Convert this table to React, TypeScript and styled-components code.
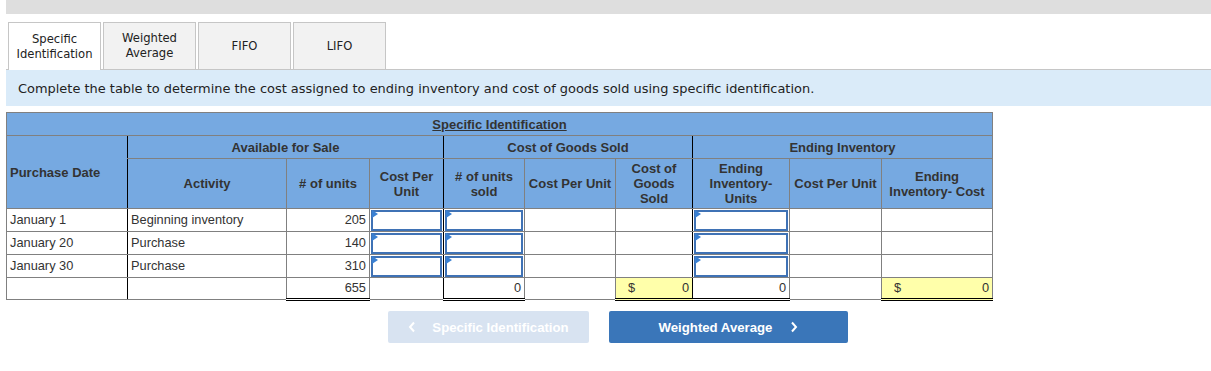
import React from "react";
import styled, { createGlobalStyle, css } from "styled-components";

const GlobalStyle = createGlobalStyle`
  body {
    margin: 0;
    background: #fff;
    font-family: "Liberation Sans", Arial, sans-serif;
  }
`;

const Page = styled.div`
  padding-left: 6px;
  width: 1205px;
`;

const TopBar = styled.div`
  height: 14px;
  background: #dedede;
`;

const TabStrip = styled.div`
  display: flex;
  gap: 2px;
  margin-top: 8px;
  padding-left: 2px;
  border-bottom: 1px solid #c6c6c6;
  height: 47px;
`;

const Tab = styled.div<{ $active?: boolean }>`
  box-sizing: border-box;
  width: 93px;
  height: 47px;
  display: flex;
  align-items: center;
  justify-content: center;
  text-align: center;
  font-family: "DejaVu Sans", Verdana, sans-serif;
  font-size: 11.6px;
  line-height: 15px;
  color: #222;
  border: 1px solid #c6c6c6;
  border-bottom: none;
  background: ${(p) => (p.$active ? "#fff" : "#f2f2f2")};
  ${(p) =>
    p.$active &&
    css`
      height: 48px;
      position: relative;
      z-index: 1;
    `}
`;

const Instructions = styled.div`
  height: 36px;
  background: #daebf9;
  display: flex;
  align-items: center;
  padding-left: 12px;
  font-family: "DejaVu Sans", Verdana, sans-serif;
  font-size: 12.95px;
  color: #222;
`;

const Table = styled.table`
  margin-top: 6px;
  border-collapse: collapse;
  table-layout: fixed;
  width: 986px;
  font-size: 12.8px;
  color: #333;
  border: 1px solid #808080;
`;

type Edge = "grey" | "black" | "none";

const edge = (e?: Edge) =>
  e === "black" ? "1px solid #000" : e === "none" ? "none" : "1px solid #808080";

const Head = styled.th<{ $left?: Edge; $bottom?: Edge; $top?: Edge }>`
  background: #76a9e1;
  color: #333;
  font-weight: bold;
  font-size: 13px;
  line-height: 15px;
  text-align: center;
  vertical-align: middle;
  padding: 0 1px;
  border-left: ${(p) => edge(p.$left)};
  border-bottom: ${(p) => edge(p.$bottom)};
  border-top: ${(p) => edge(p.$top)};
`;

const TitleLink = styled.span`
  text-decoration: underline;
`;

const Row = styled.tr<{ $h: number }>`
  height: ${(p) => p.$h}px;
`;

const Cell = styled.td<{
  $left?: Edge;
  $align?: "left" | "right";
  $total?: boolean;
  $yellow?: boolean;
}>`
  padding: 0 3px;
  line-height: 14px;
  text-align: ${(p) => p.$align ?? "left"};
  vertical-align: middle;
  border-left: ${(p) => edge(p.$left)};
  border-bottom: 1px solid #808080;
  background: ${(p) => (p.$yellow ? "#ffffaa" : "#fff")};
  ${(p) =>
    p.$total &&
    css`
      border-top: 1px solid #000;
      border-bottom: 3px double #000;
    `}
`;

const InputCell = styled.td<{ $left?: Edge }>`
  padding: 1px 1px 0 1px;
  border-left: ${(p) => edge(p.$left)};
  border-bottom: 1px solid #808080;
`;

const InputBox = styled.div`
  position: relative;
  box-sizing: border-box;
  height: 21px;
  border: 2px solid #3f72b5;
  background: #fff;
  &::before {
    content: "";
    position: absolute;
    left: -1px;
    top: -2px;
    border-left: 6px solid #3a80d2;
    border-top: 4px solid transparent;
    border-bottom: 4px solid transparent;
  }
`;

const Money = styled.div`
  display: flex;
  justify-content: space-between;
  padding-left: 9px;
`;

const Buttons = styled.div`
  display: flex;
  gap: 20px;
  margin-top: 10px;
  padding-left: 382px;
`;

const NavButton = styled.div<{ $disabled?: boolean; $w: number }>`
  width: ${(p) => p.$w}px;
  height: 32px;
  display: flex;
  align-items: center;
  justify-content: center;
  gap: ${(p) => (p.$disabled ? 16 : 18)}px;
  border-radius: 2px;
  background: ${(p) => (p.$disabled ? "#d8e3f1" : "#3a76b9")};
  color: #fff;
  font-weight: bold;
  font-size: 13.2px;
`;

const Chevron: React.FC<{ dir: "left" | "right" }> = ({ dir }) => (
  <svg width="8" height="12" viewBox="0 0 8 12">
    <path
      d={dir === "left" ? "M6 1.5 L2 6 L6 10.5" : "M2 1.5 L6 6 L2 10.5"}
      fill="none"
      stroke="#fff"
      strokeWidth="2"
    />
  </svg>
);

const rows = [
  { date: "January 1", activity: "Beginning inventory", units: 205 },
  { date: "January 20", activity: "Purchase", units: 140 },
  { date: "January 30", activity: "Purchase", units: 310 },
];

const widths = [121, 159, 83, 74, 81, 91, 77, 97, 92, 111];

export default function App() {
  return (
    <Page>
      <GlobalStyle />
      <TopBar />
      <TabStrip>
        <Tab $active>
          Specific
          <br />
          Identification
        </Tab>
        <Tab>
          Weighted
          <br />
          Average
        </Tab>
        <Tab>FIFO</Tab>
        <Tab>LIFO</Tab>
      </TabStrip>
      <Instructions>
        Complete the table to determine the cost assigned to ending inventory and cost of goods sold using specific
        identification.
      </Instructions>
      <Table>
        <colgroup>
          {widths.map((w, i) => (
            <col key={i} style={{ width: w }} />
          ))}
        </colgroup>
        <thead>
          <Row $h={23}>
            <Head colSpan={10}>
              <TitleLink>Specific Identification</TitleLink>
            </Head>
          </Row>
          <Row $h={23}>
            <Head rowSpan={2} style={{ textAlign: "left", paddingLeft: 3 }}>
              Purchase Date
            </Head>
            <Head colSpan={3} $left="black">
              Available for Sale
            </Head>
            <Head colSpan={3} $left="black">
              Cost of Goods Sold
            </Head>
            <Head colSpan={3} $left="black">
              Ending Inventory
            </Head>
          </Row>
          <Row $h={50}>
            <Head $left="black">Activity</Head>
            <Head># of units</Head>
            <Head>
              Cost Per
              <br />
              Unit
            </Head>
            <Head $left="black">
              # of units
              <br />
              sold
            </Head>
            <Head>Cost Per Unit</Head>
            <Head>
              Cost of
              <br />
              Goods
              <br />
              Sold
            </Head>
            <Head $left="black">
              Ending
              <br />
              Inventory-
              <br />
              Units
            </Head>
            <Head>Cost Per Unit</Head>
            <Head>
              Ending
              <br />
              Inventory- Cost
            </Head>
          </Row>
        </thead>
        <tbody>
          {rows.map((r) => (
            <Row $h={23} key={r.date}>
              <Cell>{r.date}</Cell>
              <Cell $left="black">{r.activity}</Cell>
              <Cell $align="right">{r.units}</Cell>
              <InputCell>
                <InputBox />
              </InputCell>
              <InputCell $left="black">
                <InputBox />
              </InputCell>
              <Cell />
              <Cell />
              <InputCell $left="black">
                <InputBox />
              </InputCell>
              <Cell />
              <Cell />
            </Row>
          ))}
          <Row $h={22}>
            <Cell />
            <Cell $left="black" />
            <Cell $align="right" $total>
              655
            </Cell>
            <Cell />
            <Cell $align="right" $left="black" $total>
              0
            </Cell>
            <Cell />
            <Cell $total $yellow>
              <Money>
                <span>$</span>
                <span>0</span>
              </Money>
            </Cell>
            <Cell $align="right" $left="black" $total>
              0
            </Cell>
            <Cell />
            <Cell $total $yellow>
              <Money>
                <span>$</span>
                <span>0</span>
              </Money>
            </Cell>
          </Row>
        </tbody>
      </Table>
      <Buttons>
        <NavButton $disabled $w={201}>
          <Chevron dir="left" />
          <span>Specific Identification</span>
        </NavButton>
        <NavButton $w={239}>
          <span>Weighted Average</span>
          <Chevron dir="right" />
        </NavButton>
      </Buttons>
    </Page>
  );
}
